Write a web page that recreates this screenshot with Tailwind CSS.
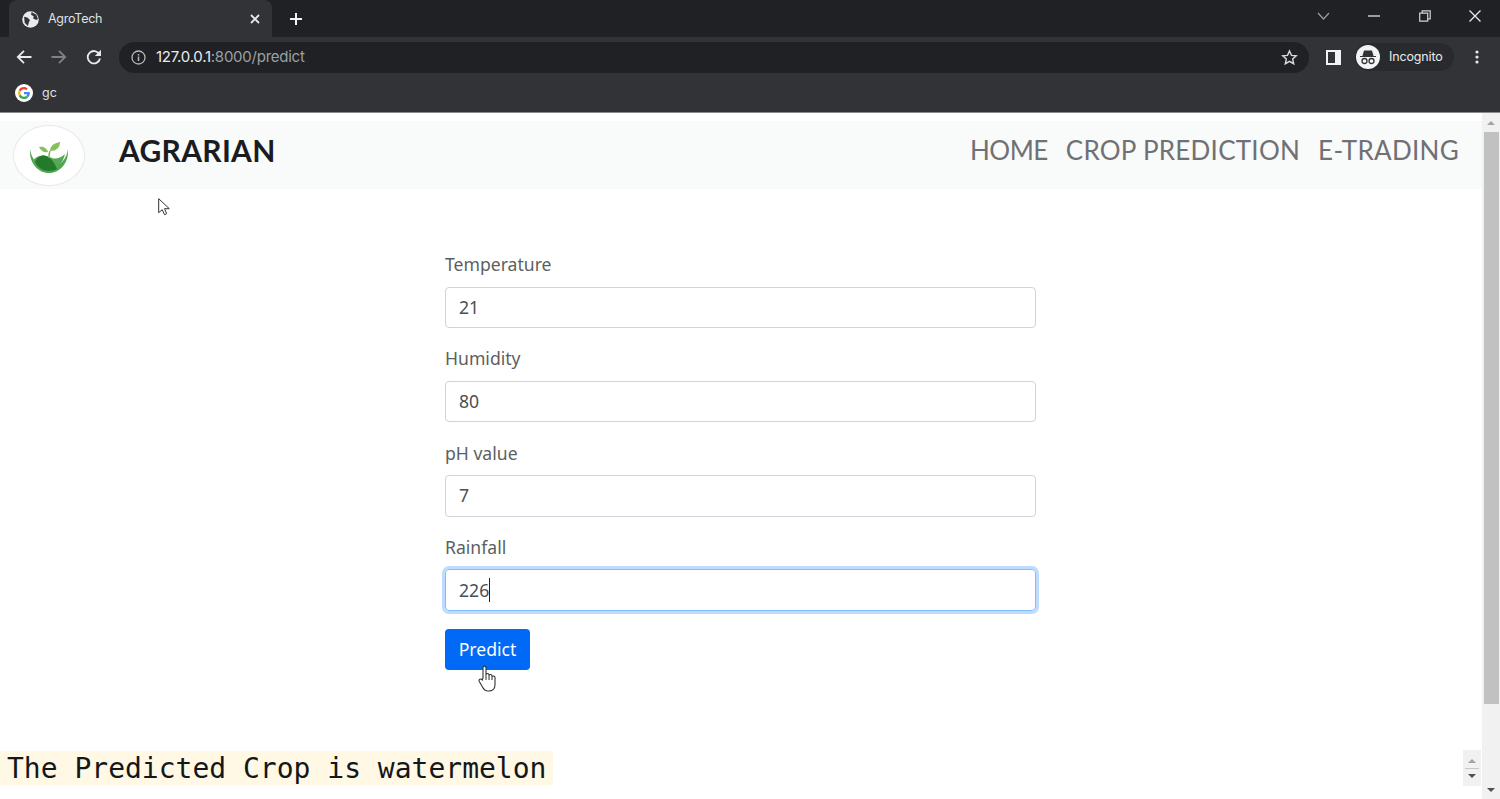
<!DOCTYPE html>
<html lang="en">
<head>
  <meta charset="UTF-8">
  <title>AgroTech</title>
  <script src="https://cdn.jsdelivr.net/npm/@tailwindcss/browser@4"></script>
</head>
<body class="h-[799px] w-[1500px] overflow-hidden bg-white flex flex-col relative font-['Noto_Sans',sans-serif]">

  <!-- Tab strip -->
  <div class="h-[37px] bg-[#202124] flex items-end pl-[9px] shrink-0">
    <div class="w-[263px] h-[37px] bg-[#323336] rounded-t-lg flex items-center pt-[1px] pl-[13px] pr-[12px] text-[#dee1e6]">
      <svg class="w-[17px] h-[17px] mr-[9px]" viewBox="0 0 16 16"><circle cx="8" cy="8" r="7.8" fill="#e8eaed"/><path d="M2 5.500l3 .5 2.500 2.500-1 2-1 3.500-3-3zM9 1l-.5 2.500L11 5l-.5 2 3 1.500 1.500-1-1.500-4z" fill="#323336"/></svg>
      <span class="text-[12.5px] font-['Inter',sans-serif] tracking-[-0.25px] flex-1">AgroTech</span>
      <svg class="w-[10px] h-[10px]" viewBox="0 0 10 10"><path d="M1 1l8 8M9 1l-8 8" stroke="#e8eaed" stroke-width="1.800"/></svg>
    </div>
    <svg class="w-[14px] h-[14px] ml-[17px] mb-[11px]" viewBox="0 0 14 14"><path d="M7 1v12M1 7h12" stroke="#f1f3f4" stroke-width="2"/></svg>
    <div class="flex-1"></div>
    <div class="flex items-center h-[37px] pb-[5px] pr-[19px]">
      <svg class="w-[13px] h-[8px] mr-[38px]" viewBox="0 0 13 8"><path d="M1 1l5.500 6L12 1" fill="none" stroke="#9aa0a6" stroke-width="1.200"/></svg>
      <svg class="w-[12px] h-[2px] mr-[39px]" viewBox="0 0 12 2"><path d="M0 1h12" stroke="#c4c7c9" stroke-width="1.500"/></svg>
      <svg class="w-[12px] h-[12px] mr-[38px]" viewBox="0 0 12 12"><path d="M.7 3.200h8v8h-8zM3.200 3V.8h8v8H9" fill="none" stroke="#d0d2d4" stroke-width="1.200"/></svg>
      <svg class="w-[12px] h-[12px]" viewBox="0 0 12 12"><path d="M.5.500l11 11M11.500.500l-11 11" stroke="#e8eaed" stroke-width="1.300"/></svg>
    </div>
  </div>

  <!-- Toolbar -->
  <div class="h-[38px] bg-[#323336] flex items-center shrink-0 pt-[2px] pl-[16px] pr-[20px]">
    <svg class="w-[16px] h-[16px]" viewBox="0 0 16 16"><path d="M15.500 8H2M8 1.800L1.800 8 8 14.200" fill="none" stroke="#e8eaed" stroke-width="1.800"/></svg>
    <svg class="w-[16px] h-[16px] ml-[19px]" viewBox="0 0 16 16"><path d="M.5 8H14M8 1.800L14.200 8 8 14.200" fill="none" stroke="#7f8285" stroke-width="1.800"/></svg>
    <svg class="w-[16px] h-[16px] ml-[19px]" viewBox="0 0 16 16"><path d="M13.400 5.300A6.200 6.200 0 1 0 14 9.500" fill="none" stroke="#e8eaed" stroke-width="1.800"/><path d="M15 .8v6.200H8.800z" fill="#e8eaed"/></svg>
    <div class="w-[1190px] h-[31px] rounded-full bg-[#202124] ml-[17px] flex items-center pl-[12px] pr-[11px] text-[15px] font-['Inter',sans-serif] tracking-[-0.25px]">
      <svg class="w-[15px] h-[15px] mr-[10px]" viewBox="0 0 15 15"><circle cx="7.500" cy="7.500" r="6.500" fill="none" stroke="#b4b6b8" stroke-width="1.300"/><path d="M7.500 6.500v4.500M7.500 4v1.500" stroke="#b4b6b8" stroke-width="1.500"/></svg>
      <span class="text-[#e8eaed]">127.0.0.1</span><span class="text-[#9aa0a6]">:8000/predict</span>
      <div class="flex-1"></div>
      <svg class="w-[17px] h-[17px]" viewBox="0 0 24 24"><path d="M12 2.800l2.800 6.200 6.700.7-5 4.500 1.400 6.600L12 17.400l-5.900 3.400 1.400-6.600-5-4.500 6.700-.7z" fill="none" stroke="#d8dadc" stroke-width="2"/></svg>
    </div>
    <svg class="w-[15px] h-[15px] ml-[17px]" viewBox="0 0 15 15"><path d="M0 0h15v15H0z" fill="#f1f3f4"/><path d="M2 2h7v11H2z" fill="#323336"/></svg>
    <div class="w-[99px] h-[28px] ml-[14px] rounded-full bg-[#292a2d] flex items-center pl-[1px] text-[12.500px] text-[#e8eaed] font-['Inter',sans-serif] tracking-[-0.15px]">
      <svg class="w-[24px] h-[24px] mr-[9px]" viewBox="0 0 24 24"><circle cx="12" cy="12" r="12" fill="#f1f3f4"/><path d="M4 11.500h16M7 11l1.500-5h7L17 11" fill="#323336" stroke="#323336" stroke-width="1.200"/><circle cx="8.500" cy="16" r="2.500" fill="none" stroke="#323336" stroke-width="1.300"/><circle cx="15.500" cy="16" r="2.500" fill="none" stroke="#323336" stroke-width="1.300"/></svg>
      Incognito
    </div>
    <svg class="w-[4px] h-[14px] ml-[21px]" viewBox="0 0 4 14"><circle cx="2" cy="2" r="1.600" fill="#e8eaed"/><circle cx="2" cy="7" r="1.600" fill="#e8eaed"/><circle cx="2" cy="12" r="1.600" fill="#e8eaed"/></svg>
  </div>

  <!-- Bookmarks bar -->
  <div class="h-[38px] bg-[#323336] border-b border-[#8a8b8d] flex items-center pl-[15px] shrink-0 pb-[1px]">
    <svg class="w-[18px] h-[18px] mr-[9px]" viewBox="0 0 18 18"><circle cx="9" cy="9" r="9" fill="#fff"/><path d="M14.800 9.200c0-.4 0-.8-.1-1.200H9v2.300h3.300c-.2.800-.6 1.400-1.200 1.800l1.800 1.400c1.100-1 1.900-2.500 1.900-4.300z" fill="#4285f4"/><path d="M9 15c1.600 0 3-.5 3.900-1.500l-1.800-1.400c-.5.300-1.200.6-2.100.6-1.600 0-2.900-1.100-3.400-2.500L3.700 12C4.700 13.800 6.700 15 9 15z" fill="#34a853"/><path d="M5.600 10.200c-.3-.8-.3-1.600 0-2.400L3.700 6.400c-.8 1.600-.8 3.600 0 5.200z" fill="#fbbc05"/><path d="M9 5.300c.9 0 1.600.3 2.200.9l1.600-1.600C11.800 3.600 10.500 3 9 3 6.700 3 4.700 4.200 3.700 6.100l1.900 1.500C6.100 6.300 7.400 5.300 9 5.300z" fill="#ea4335"/></svg>
    <span class="text-[12.5px] text-[#dee1e6] font-['Inter',sans-serif]">gc</span>
  </div>

  <!-- Page -->
  <div class="flex-1 flex min-h-0">
    <main class="flex-1 min-w-0 flex flex-col">
      <nav class="mt-[8px] h-[68px] bg-[#f9fafa] flex items-center pl-[13px] pr-[23px] shrink-0">
        <div class="w-[72px] h-[61px] rounded-[50%] bg-white border border-[#e8e9ea] flex items-center justify-center">
          <svg class="w-[42px] h-[36px] mt-[3px] mr-[1px]" viewBox="0 0 42 36">
            <path d="M2 10c-1 14 8 24 19 24s20-10 19-24c-1 9-8 19-19 19S3 19 2 10z" fill="#4ea651"/>
            <path d="M5 21c6-6 11-5 16-3 5 2 9 3 16-3-2 9-8 17-16 17S8 28 5 21z" fill="#57a957"/>
            <path d="M13 17c6-2 12 3 16 13-2 1-5 2-8 2-6 0-11-3-14-9 1-3 3-5 6-6z" fill="#237a2b"/>
            <path d="M21 19c0-3 0-5 1-7" fill="none" stroke="#6fb544" stroke-width="1.500"/>
            <path d="M22 12c0-5 4-8 10-9 0 6-4 9-10 9zM20 13c-4 1-7-1-9-5 4-1 8 1 9 5z" fill="#86c05a"/>
          </svg>
        </div>
        <span class="ml-[34px] mb-[10px] text-[30px] font-bold text-[#1a1c1f] font-['Lato',sans-serif] tracking-[0.3px]">AGRARIAN</span>
        <div class="flex-1"></div>
        <div class="flex gap-[18px] mb-[10px] text-[26px] text-[#6f7174] font-['Lato',sans-serif]">
          <a href="#" class="tracking-[-0.5px]">HOME</a>
          <a href="#" class="tracking-[0.25px]">CROP PREDICTION</a>
          <a href="#" class="tracking-[0.3px]">E-TRADING</a>
        </div>
      </nav>

      <form class="w-[591px] ml-[445px] mt-[60px] text-[17.6px] text-[#212529]">
        <label class="block h-[38px] leading-[30px] text-[#5c5f61]">Temperature</label>
        <input type="text" value="21" class="block w-full h-[41px] pl-[13px] pb-[2px] border border-[#ced4da] rounded-[4px] text-[#495057] mb-[15px]">
        <label class="block h-[38px] leading-[30px] text-[#5c5f61]">Humidity</label>
        <input type="text" value="80" class="block w-full h-[41px] pl-[13px] pb-[2px] border border-[#ced4da] rounded-[4px] text-[#495057] mb-[15px]">
        <label class="block h-[38px] pt-[1px] leading-[30px] text-[#5c5f61]">pH value</label>
        <input type="text" value="7" class="block w-full h-[42px] pl-[13px] pb-[2px] border border-[#ced4da] rounded-[4px] text-[#495057] mb-[14px]">
        <label class="block h-[38px] pt-[1px] leading-[30px] text-[#5c5f61]">Rainfall</label>
        <div class="h-[42px] pl-[13px] flex items-center border border-[#80bdff] rounded-[4px] text-[#495057] shadow-[0_0_0_3px_#bfdcff] mb-[18px]">226<span class="w-px h-[24px] bg-[#222]"></span></div>
        <button type="button" class="block w-[85px] h-[41px] rounded-[4px] bg-[#0069f5] text-white">Predict</button>
      </form>

      <div class="mt-[81px] w-[553px] h-[34px] pl-[7px] bg-[#fff8e5] text-[28px] leading-[36px] text-[#14171a] font-['DejaVu_Sans_Mono',monospace]">The Predicted Crop is watermelon</div>
    </main>

    <!-- Scrollbar -->
    <div class="w-[18px] bg-[#f1f1f1] flex flex-col items-center shrink-0">
      <div class="h-[19px] flex items-center justify-center"><div class="border-x-[4px] border-b-[4px] border-x-transparent border-b-[#a3a3a3]"></div></div>
      <div class="w-[15px] h-[572px] bg-[#c1c1c1]"></div>
      <div class="flex-1"></div>
      <div class="h-[18px] flex items-center justify-center"><div class="border-x-[4px] border-t-[4px] border-x-transparent border-t-[#505050]"></div></div>
    </div>
  </div>

  <!-- Number spinner over the page edge -->
  <div class="absolute left-[1463px] top-[750px] w-[18px] h-[36px] bg-[#f1f1f1] flex flex-col items-center justify-center gap-[5px]">
    <div class="border-x-[4px] border-b-[4px] border-x-transparent border-b-[#a3a3a3]"></div>
    <div class="w-[14px] h-px bg-[#c8c8c8]"></div>
    <div class="border-x-[4px] border-t-[4px] border-x-transparent border-t-[#505050]"></div>
  </div>

  <!-- Mouse pointer trail -->
  <svg class="absolute left-[158px] top-[198px] w-[12px] h-[18px]" viewBox="0 0 12 18"><path d="M.7.700v14l3.500-3 2.300 5 2.200-1-2.200-5h4.800z" fill="#fff" stroke="#333" stroke-width="1"/></svg>
  <svg class="absolute left-[478px] top-[665px] w-[20px] h-[27px]" viewBox="0 0 20 27"><path d="M5 13V3c0-2.500 3-2.500 3 0v7c0-2 3-2 3 0v1c0-2 3-2 3 0v1c0-1.500 3-1.500 3 .5V20c0 3.500-2.500 6-6 6H10c-3 0-4.500-2-5.500-4L1.300 16.500c-1-2 1.500-3.500 3-1.500z" fill="#fff" stroke="#333" stroke-width="1.100"/><path d="M8 10v5M11 11v4M14 12v3" stroke="#333" stroke-width="1"/></svg>
</body>
</html>
